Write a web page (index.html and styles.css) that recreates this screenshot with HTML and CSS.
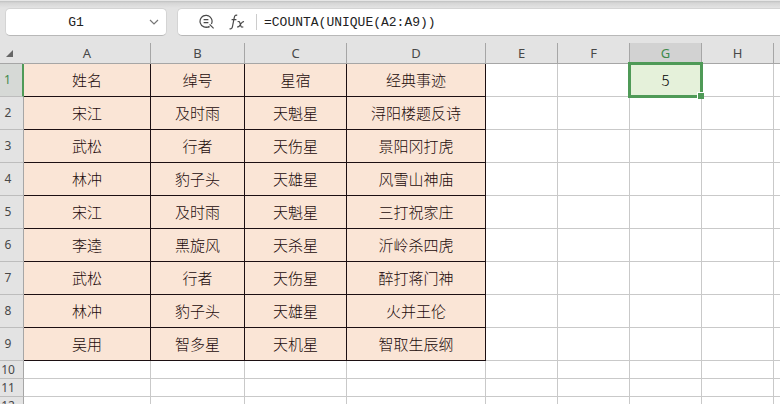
FILE: index.html
```
<!DOCTYPE html>
<html lang="zh-CN">
<head>
    <meta charset="UTF-8">
    <meta name="viewport" content="width=device-width, initial-scale=1.0">
    <title>COUNTA + UNIQUE</title>
    <link rel="stylesheet" href="styles.css">
</head>
<body>
    <div class="toolbar">
        <div class="name-box">
            <input type="text" class="name-input" value="G1" aria-label="名称框">
            <button type="button" class="icon-btn arrow" aria-label="展开">
                <svg width="10" height="6" viewBox="0 0 10 6"><path d="M1 1l4 4 4-4"/></svg>
            </button>
        </div>
        <div class="formula-bar">
            <button type="button" class="icon-btn" aria-label="查看公式">
                <svg width="16" height="16" viewBox="0 0 16 16"><path d="M10.5 12.2A6 6 0 1 1 12.4 10M4.6 5.6h4.8M4.6 8.6h4.8M10.6 10.3l4 4M5.5 13.2h5"/></svg>
            </button>
            <button type="button" class="icon-btn fx" aria-label="插入函数">
                <svg width="16" height="16" viewBox="0 0 16 16"><path d="M8.2 1.4C6.2.6 5.5 2.2 5.2 3.8L3.5 12.4C3.2 14.2 2.3 15.2.6 14.6M2.6 5.6h4.8M8.6 7.8c1.6-.9 2.1.2 2.6 2l.5 1.8c.4 1.5 1.1 1.9 2.6 1.1M15 7.6c-1.4-.3-2.2.7-3.1 2.2l-1 1.5c-.8 1.2-1.4 1.9-2.8 1.5"/></svg>
            </button>
            <input type="text" class="formula-input" value="=COUNTA(UNIQUE(A2:A9))" aria-label="编辑栏">
        </div>
    </div>

    <table class="sheet">
        <colgroup>
            <col class="col-head">
            <col class="col-a">
            <col class="col-b">
            <col class="col-c">
            <col class="col-d">
            <col class="col-std">
            <col class="col-std">
            <col class="col-std">
            <col class="col-std">
            <col>
        </colgroup>
        <thead>
            <tr>
                <th class="corner"><svg width="7" height="7" viewBox="0 0 7 7"><path d="M7 0v7H0z"/></svg></th>
                <th>A</th><th>B</th><th>C</th><th>D</th><th>E</th><th>F</th><th class="current">G</th><th>H</th><th></th>
            </tr>
        </thead>
        <tbody class="data">
            <tr><th class="current">1</th><td>姓名</td><td>绰号</td><td>星宿</td><td>经典事迹</td><td></td><td></td><td class="selected">5</td><td></td><td></td></tr>
            <tr><th>2</th><td>宋江</td><td>及时雨</td><td>天魁星</td><td>浔阳楼题反诗</td><td></td><td></td><td></td><td></td><td></td></tr>
            <tr><th>3</th><td>武松</td><td>行者</td><td>天伤星</td><td>景阳冈打虎</td><td></td><td></td><td></td><td></td><td></td></tr>
            <tr><th>4</th><td>林冲</td><td>豹子头</td><td>天雄星</td><td>风雪山神庙</td><td></td><td></td><td></td><td></td><td></td></tr>
            <tr><th>5</th><td>宋江</td><td>及时雨</td><td>天魁星</td><td>三打祝家庄</td><td></td><td></td><td></td><td></td><td></td></tr>
            <tr><th>6</th><td>李逵</td><td>黑旋风</td><td>天杀星</td><td>沂岭杀四虎</td><td></td><td></td><td></td><td></td><td></td></tr>
            <tr><th>7</th><td>武松</td><td>行者</td><td>天伤星</td><td>醉打蒋门神</td><td></td><td></td><td></td><td></td><td></td></tr>
            <tr><th>8</th><td>林冲</td><td>豹子头</td><td>天雄星</td><td>火并王伦</td><td></td><td></td><td></td><td></td><td></td></tr>
            <tr><th>9</th><td>吴用</td><td>智多星</td><td>天机星</td><td>智取生辰纲</td><td></td><td></td><td></td><td></td><td></td></tr>
        </tbody>
        <tbody class="blank">
            <tr><th>10</th><td></td><td></td><td></td><td></td><td></td><td></td><td></td><td></td><td></td></tr>
            <tr><th>11</th><td></td><td></td><td></td><td></td><td></td><td></td><td></td><td></td><td></td></tr>
            <tr><th>12</th><td></td><td></td><td></td><td></td><td></td><td></td><td></td><td></td><td></td></tr>
        </tbody>
    </table>
</body>
</html>
```
FILE: styles.css
```
* {
    box-sizing: border-box;
}

body {
    margin: 0;
    height: 100vh;
    overflow: hidden;
    background-color: #fff;
    font-family: "Noto Sans", "Noto Sans CJK SC", sans-serif;
}

/* Name box and formula bar */
.toolbar {
    display: flex;
    gap: 10px;
    padding: 8px 0 7px 5px;
    background: linear-gradient(#e6e6e6 1px, #bfc1c1 1px, #d6d6d6 3px, #e3e3e3 8px);
}

.name-box, .formula-bar {
    display: flex;
    align-items: center;
    height: 28px;
    background-color: #fff;
    border: 1px solid #d4d4d4;
    border-bottom-color: #b8b8b8;
}

.name-box {
    width: 162px;
    padding-right: 4px;
    border-radius: 5px;
}

.formula-bar {
    flex: 1;
    padding-left: 18px;
    border-right: none;
    border-radius: 5px 0 0 5px;
}

.name-input, .formula-input {
    min-width: 0;
    padding: 0;
    border: none;
    outline: none;
    background: none;
    color: #222;
    font-family: "Liberation Mono", monospace;
    font-size: 13px;
}

.name-input {
    flex: 1;
    text-align: center;
}

.formula-input {
    flex: 1;
    height: 16px;
    margin-left: 8px;
    padding-left: 7px;
    border-left: 1px solid #ccc;
}

.icon-btn {
    display: flex;
    align-items: center;
    justify-content: center;
    width: 22px;
    height: 22px;
    padding: 0;
    border: none;
    background: none;
    cursor: pointer;
}

.icon-btn svg {
    fill: none;
    stroke: #4a4a4a;
    stroke-width: 1.2;
}

.arrow {
    width: 16px;
}

.arrow svg {
    stroke: #777;
}

.fx {
    margin-left: 8px;
}

/* Sheet grid */
.sheet {
    width: 100%;
    table-layout: fixed;
    border-collapse: separate;
    border-spacing: 0;
}

.col-head { width: 24px; }
.col-a { width: 127px; }
.col-b { width: 94px; }
.col-c { width: 102px; }
.col-d { width: 139px; }
.col-std { width: 72px; }

th, td {
    padding: 0;
    border-right: 1px solid #c9c9c9;
    border-bottom: 1px solid #c9c9c9;
    text-align: center;
    line-height: 16px;
}

th {
    background-color: #e3e3e3;
    border-color: #a6a6a6;
    color: #484848;
    font-size: 13px;
    font-weight: normal;
}

th:last-child, td:last-child {
    border-right: none;
}

thead th {
    height: 21px;
}

thead th.current {
    background-color: #d2d2d2;
    color: #3f8a4c;
}

.corner {
    padding-right: 5px;
    border-right-color: #e3e3e3;
    line-height: 0;
}

.corner svg {
    fill: #666;
}

tbody th {
    padding-right: 7px;
    border-bottom-color: #bdbdbd;
    font-size: 12px;
}

tbody th.current {
    background-color: #d6d9d6;
    border-right: 2px solid #4f9a57;
    color: #3f8a4c;
}

.data tr {
    height: 33px;
}

.data td {
    color: #1a0a0a;
    font-family: "Noto Sans CJK SC", sans-serif;
    font-size: 15px;
    font-weight: 300;
}

.data td:nth-child(-n+5) {
    background-color: #fae5d6;
    border-color: #1c0f12;
}

.blank tr {
    height: 18px;
}

/* Active cell with its fill handle */
.data .selected {
    position: relative;
    background-color: #e5f1da;
    color: #000;
}

.selected::before {
    content: "";
    position: absolute;
    inset: -2px;
    border: 3px solid #4f9a57;
}

.selected::after {
    content: "";
    position: absolute;
    right: -3px;
    bottom: -3px;
    width: 6px;
    height: 6px;
    background-color: #4f9a57;
    border: 1px solid #fff;
    border-right: none;
    border-bottom: none;
}
```
